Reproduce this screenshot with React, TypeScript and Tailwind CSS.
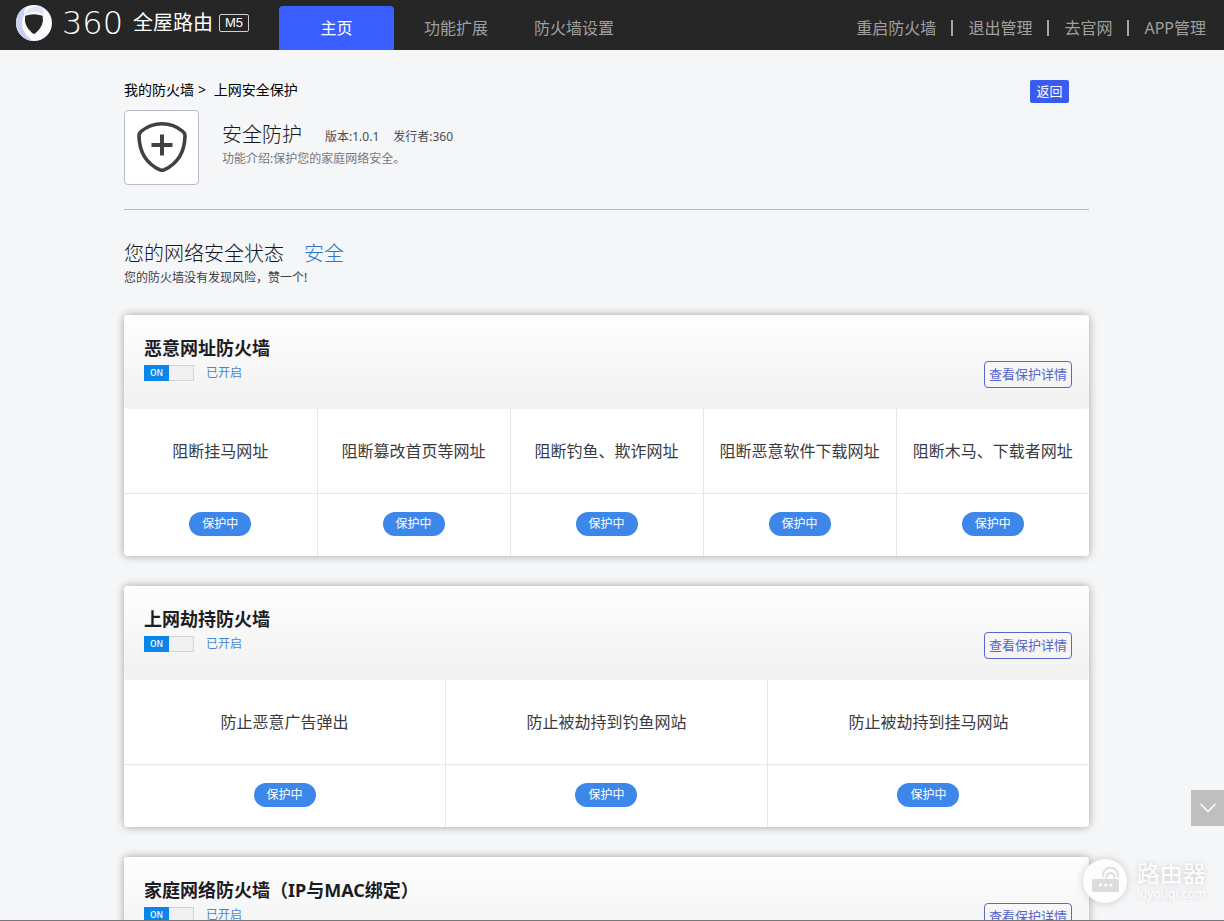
import { useState } from "react";

type Firewall = { id: string; title: string; items: string[] };

const firewalls: Firewall[] = [
  {
    id: "url",
    title: "恶意网址防火墙",
    items: [
      "阻断挂马网址",
      "阻断篡改首页等网址",
      "阻断钓鱼、欺诈网址",
      "阻断恶意软件下载网址",
      "阻断木马、下载者网址",
    ],
  },
  {
    id: "hijack",
    title: "上网劫持防火墙",
    items: ["防止恶意广告弹出", "防止被劫持到钓鱼网站", "防止被劫持到挂马网站"],
  },
  {
    id: "home",
    title: "家庭网络防火墙（IP与MAC绑定）",
    items: [],
  },
];

const tools = ["重启防火墙", "退出管理", "去官网", "APP管理"];

function Logo() {
  return (
    <a href="#home" className="flex w-[279px] shrink-0 items-center pb-1 pl-4 text-white">
      <svg viewBox="0 0 36 36" className="h-9 w-9 shrink-0" aria-hidden="true">
        <circle cx="18" cy="18" r="18" fill="#fafaff" />
        <path d="M8.5 9.5C4 16 5 28 17 35.900C8 35.500 0 28 0 18C0 10 5 3 11 1.500C8 4 8 7 8.500 9.500Z" fill="#c9d0ef" />
        <path d="M9 9.500C15 5.500 22 6 27.500 9.800C28 6.500 27 3 24.500 1.400C17 0.500 10 3.500 9 9.500Z" fill="#dfe3f7" />
        <path d="M9.200 10.800Q18 7.800 26.600 10.800Q28.600 21 19.500 28.200Q18 29.300 16.500 28.200Q7.300 21 9.200 10.800Z" fill="#262626" />
      </svg>
      <span className="ml-2.5 w-[71px] font-['DejaVu_Sans',sans-serif] text-[32px] leading-9 font-extralight">360</span>
      <span className="text-[20px] leading-9">全屋路由</span>
      <span className="ml-1.5 rounded-[2px] border border-[#d0d0d0] px-[5px] font-['Liberation_Sans',sans-serif] text-[13px] leading-4">
        M5
      </span>
    </a>
  );
}

function Header() {
  return (
    <header className="flex h-[50px] shrink-0 bg-[#262626] text-[16px] text-[#a0a0a0]">
      <Logo />
      <nav className="flex items-end whitespace-nowrap">
        <a href="#home" className="flex h-11 w-[115px] items-center justify-center rounded-t-[4px] bg-[#3a5eff] text-white">
          主页
        </a>
        <a href="#features" className="ml-[30px] flex h-11 items-center">
          功能扩展
        </a>
        <a href="#firewall" className="ml-[46px] flex h-11 items-center">
          防火墙设置
        </a>
      </nav>
      <ul className="ml-auto flex items-center pt-1.5 pr-[18px] whitespace-nowrap">
        {tools.map((tool, i) => (
          <li key={tool} className="flex items-center">
            {i > 0 && <span className="mx-[15px] h-4 w-[2px] bg-[#a8a8a8]" />}
            <a href="#tools">{tool}</a>
          </li>
        ))}
      </ul>
    </header>
  );
}

function FirewallCard({ id, title, items }: Firewall) {
  const [on, setOn] = useState(true);
  return (
    <section className="mb-[30px] overflow-hidden rounded-[4px] bg-white shadow-[0_0_8px_rgba(0,0,0,0.35)]">
      <div className="flex h-[94px] justify-between rounded-b-[4px] bg-linear-to-b from-[#fefefe] to-[#f1f1f1] pr-[17px] pl-5">
        <div className="pt-[21px]">
          <h2 className="text-[18px] leading-6 font-bold text-[#1c1c26]">{title}</h2>
          <div className="mt-[5px] flex items-center gap-3">
            <label className="flex h-4 w-[50px] cursor-pointer border border-[#d4d4d4] bg-[#f0f0f0]">
              <input
                id={id}
                type="checkbox"
                aria-label={title}
                checked={on}
                onChange={(e) => setOn(e.target.checked)}
                className="peer sr-only"
              />
              <span className="-my-px -ml-px hidden h-4 w-[25px] bg-[#0a86ea] text-center font-['Liberation_Mono',monospace] text-[11px] leading-4 text-white peer-checked:block">
                ON
              </span>
            </label>
            <span className="text-[12px] leading-4 text-[#4a86d0]">{on ? "已开启" : "已关闭"}</span>
          </div>
        </div>
        <button
          type="button"
          className="mt-[46px] h-[27px] w-[88px] rounded-[4px] border border-[#5468d0] text-[13px] whitespace-nowrap text-[#5565cc]"
        >
          查看保护详情
        </button>
      </div>
      {items.length > 0 && (
        <table className="w-full table-fixed text-center">
          <thead>
            <tr className="h-[84px] border-b border-[#e6e6e6]">
              {items.map((item) => (
                <th key={item} className="border-r border-[#e6e6e6] text-[16px] font-normal whitespace-nowrap text-[#3a3a42] last:border-r-0">
                  {item}
                </th>
              ))}
            </tr>
          </thead>
          <tbody>
            <tr className="h-[63px]">
              {items.map((item) => (
                <td key={item} className="border-r border-[#e6e6e6] pb-0.5 last:border-r-0">
                  <span className="mx-auto block h-6 w-[62px] rounded-full bg-[#3d87ea] text-[12px] leading-6 text-white">
                    保护中
                  </span>
                </td>
              ))}
            </tr>
          </tbody>
        </table>
      )}
    </section>
  );
}

function AppSummary() {
  return (
    <div className="flex items-start border-b border-[#bcbcc0] pb-6">
      <div className="flex h-[75px] w-[75px] shrink-0 items-center justify-center rounded-[4px] border border-[#b9bcc8] bg-white">
        <svg viewBox="0 0 50 50" className="mb-0.5 h-[50px] w-[50px]" fill="none" stroke="#404144" aria-hidden="true">
          <path
            d="M25 1.800C33.500 1.800 40.500 5 45.800 9.300Q48.200 11.200 48 14.500C47.500 30 40.500 41.500 27.500 47.700Q25 48.800 22.500 47.700C9.500 41.500 2.500 30 2 14.500Q1.800 11.200 4.200 9.300C9.500 5 16.500 1.800 25 1.800Z"
            strokeWidth="3.600"
          />
          <path d="M25 12.500V33.500M14.500 23H35.500" strokeWidth="4" />
        </svg>
      </div>
      <div className="ml-[23px] pt-[13px]">
        <div className="flex items-end text-[12px] leading-5 text-[#4a4a50]">
          <h1 className="mr-[23px] text-[20px] leading-6 font-light text-[#16161e]">安全防护</h1>
          <span className="mr-3.5">版本:1.0.1</span>
          <span>发行者:360</span>
        </div>
        <p className="mt-1 text-[12px] leading-4 text-[#77777b]">功能介绍:保护您的家庭网络安全。</p>
      </div>
    </div>
  );
}

function Watermark() {
  return (
    <div className="pointer-events-none absolute right-[18px] bottom-[17px] flex items-center gap-2.5 text-white">
      <svg viewBox="0 0 44 44" className="h-11 w-11 drop-shadow-[0_0_4px_rgba(0,0,0,0.18)]" aria-hidden="true">
        <circle cx="22" cy="22" r="22" fill="#fdfdfd" />
        <rect x="9" y="20" width="27" height="13" rx="2" fill="#dcdcdc" />
        <g fill="none" stroke="#dcdcdc" strokeWidth="1.800">
          <path d="M20.500 18A7.300 7.300 0 1 1 34.500 18" />
          <path d="M23.800 19.500A4 4 0 1 1 31.200 19.500" />
        </g>
        <g fill="#ffffff">
          <circle cx="17.500" cy="26" r="1.600" />
          <circle cx="22.800" cy="26" r="1.600" />
          <circle cx="28" cy="26" r="1.600" />
        </g>
      </svg>
      <div className="[text-shadow:0_0_6px_rgba(0,0,0,0.2)]">
        <div className="text-[23px] leading-[26px]">路由器</div>
        <div className="text-[12px] leading-4">luyouqi.com</div>
      </div>
    </div>
  );
}

export default function App() {
  return (
    <div className="relative flex h-screen flex-col overflow-hidden border-b border-[#77777a] bg-[#f4f6f8] font-['Noto_Sans','Noto_Sans_CJK_SC',sans-serif]">
      <Header />
      <main className="min-h-0 flex-1 overflow-y-auto pr-[11px] [scrollbar-width:none]">
        <div className="mx-auto max-w-[965px]">
          <div className="flex h-[60px] items-start justify-between pt-[30px] pr-5">
            <p className="text-[14px] leading-5 text-black">
              <a href="#firewall">我的防火墙</a>
              <span className="mx-1">&gt;</span> 上网安全保护
            </p>
            <button type="button" className="h-[23px] w-[39px] rounded-[2px] bg-[#3a5bf0] text-[13px] leading-[23px] text-white">
              返回
            </button>
          </div>
          <AppSummary />
          <div className="pt-8 pb-[29px]">
            <p className="text-[20px] leading-6 font-light text-[#16161e]">
              您的网络安全状态<span className="ml-5 text-[#2f74c8]">安全</span>
            </p>
            <p className="mt-1 text-[12px] leading-4 text-[#3c3c44]">您的防火墙没有发现风险，赞一个!</p>
          </div>
          {firewalls.map((firewall) => (
            <FirewallCard key={firewall.id} {...firewall} />
          ))}
        </div>
      </main>
      <button
        type="button"
        aria-label="向下滚动"
        className="absolute right-0 bottom-[94px] flex h-9 w-[33px] items-center justify-center bg-[#bfbfbf]"
      >
        <svg viewBox="0 0 18 10" className="h-2.5 w-[18px]" fill="none" stroke="#ffffff" strokeWidth="1.500" aria-hidden="true">
          <path d="M1.500 1L9 8.500L16.500 1" />
        </svg>
      </button>
      <Watermark />
    </div>
  );
}
